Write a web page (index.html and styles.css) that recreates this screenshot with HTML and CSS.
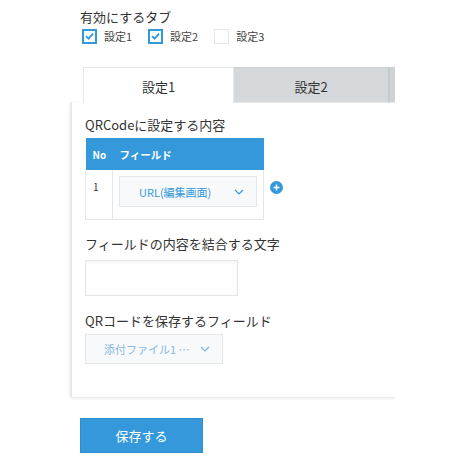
FILE: index.html
```html
<!DOCTYPE html>
<html lang="ja">
<head>
<meta charset="utf-8">
<link rel="stylesheet" href="styles.css">
</head>
<body>
<div class="page">
  <div class="enable">
    <div class="title">有効にするタブ</div>
    <div class="checks">
      <label class="check"><span class="box on"><svg viewBox="0 0 12 12" width="12" height="12"><path d="M2.2 6.2 L5 8.8 L9.8 3.4" fill="none" stroke="#3498db" stroke-width="2"/></svg></span><span class="clabel">設定1</span></label>
      <label class="check"><span class="box on"><svg viewBox="0 0 12 12" width="12" height="12"><path d="M2.2 6.2 L5 8.8 L9.8 3.4" fill="none" stroke="#3498db" stroke-width="2"/></svg></span><span class="clabel">設定2</span></label>
      <label class="check"><span class="box off"></span><span class="clabel">設定3</span></label>
    </div>
  </div>

  <div class="tabs">
    <div class="tab active">設定1</div>
    <div class="tab">設定2</div>
    <div class="tab third"></div>
  </div>

  <div class="panel">
    <div class="label">QRCodeに設定する内容</div>
    <div class="table-row">
      <table class="fields">
        <thead>
          <tr><th class="no">No</th><th class="fld">フィールド</th></tr>
        </thead>
        <tbody>
          <tr>
            <td class="no">1</td>
            <td class="fld">
              <div class="select sel-url"><span class="sel-text">URL(編集画面)</span><svg class="chev" viewBox="0 0 10 6" width="10" height="6"><path d="M1 1 L5 5 L9 1" fill="none" stroke="#3498db" stroke-width="1.2"/></svg></div>
            </td>
          </tr>
        </tbody>
      </table>
      <svg class="plus" viewBox="0 0 14 14" width="13" height="13"><circle cx="7" cy="7" r="7" fill="#3498db"/><path d="M7 3.8 V10.2 M3.8 7 H10.2" stroke="#fff" stroke-width="1.6"/></svg>
    </div>

    <div class="label lbl2">フィールドの内容を結合する文字</div>
    <div class="input"></div>

    <div class="label lbl3">QRコードを保存するフィールド</div>
    <div class="select sel-file"><span class="sel-text">添付ファイル1 ⋯</span><svg class="chev" viewBox="0 0 10 6" width="10" height="6"><path d="M1 1 L5 5 L9 1" fill="none" stroke="#7fb5e3" stroke-width="1.2"/></svg></div>
  </div>

  <button class="save">保存する</button>
</div>
</body>
</html>
```

FILE: styles.css
```css
html, body {
  margin: 0;
  padding: 0;
  background: #fff;
}
body {
  font-family: "Noto Sans CJK JP", "Open Sans", sans-serif;
  color: #333;
}
.page {
  width: 395px;
  height: 460px;
  overflow: hidden;
  padding-top: 8px;
  box-sizing: border-box;
}
.enable {
  margin-left: 80px;
}
.title {
  font-size: 13px;
  line-height: 18px;
  color: #333;
}
.checks {
  display: flex;
  margin-top: 2px;
  margin-left: 2px;
  height: 16px;
  align-items: center;
}
.check {
  display: flex;
  align-items: center;
  margin-right: 16px;
}
.box {
  width: 15px;
  height: 15px;
  box-sizing: border-box;
  display: flex;
  align-items: center;
  justify-content: center;
  background: #fff;
}
.box.on {
  border: 2px solid #3498db;
}
.box.off {
  border: 1px solid #e3e7e8;
}
.clabel {
  font-size: 11px;
  line-height: 14px;
  margin-left: 7px;
  color: #444;
}
.tabs {
  display: flex;
  margin-top: 23px;
  margin-left: 83px;
  height: 36px;
}
.tab {
  box-sizing: border-box;
  height: 36px;
  font-size: 13px;
  line-height: 37px;
  text-align: center;
  color: #333;
  background: #d4d8da;
  border-top: 1px solid #c8cdcf;
  border-bottom: 1px solid #e6e8e9;
  flex: none;
}
.tab.active {
  width: 151px;
  background: #fff;
  border: 1px solid #e3e7e8;
  border-bottom: none;
}
.tab:nth-child(2) {
  width: 154px;
}
.tab.third {
  width: 60px;
  background: #cfd3d5;
  border-left: 2px solid #c6cacd;
}
.panel {
  margin-left: 71px;
  width: 400px;
  height: 295px;
  box-sizing: border-box;
  margin-top: -1px;
  padding: 14px 0 0 13px;
  border-left: 1px solid #e3e7e8;
  box-shadow: -1px 1px 3px rgba(0,0,0,0.12);
  background: #fff;
}
.label {
  font-size: 13px;
  line-height: 18px;
  color: #333;
}
.table-row {
  display: flex;
  align-items: flex-start;
  margin-top: 4px;
}
.fields {
  border-collapse: collapse;
  width: 179px;
}
.fields th {
  background: #3498db;
  color: #fff;
  font-size: 10px;
  font-weight: bold;
  height: 32px;
  padding: 0;
  text-align: left;
}
.fields th.no {
  width: 27px;
  padding-left: 7px;
  box-sizing: border-box;
}
.fields th.fld {
  padding-left: 7px;
  font-size: 10.5px;
}
.fields td {
  border: 1px solid #e3e7e8;
  border-top: none;
  height: 49px;
  padding: 0;
  vertical-align: top;
  box-sizing: border-box;
}
.fields td.no {
  font-size: 10px;
  line-height: 14px;
  padding: 10px 0 0 7px;
}
.fields td.fld {
  padding: 6px 0 0 6px;
}
.select {
  box-sizing: border-box;
  display: flex;
  align-items: center;
  background: #f7f9fa;
  border: 1px solid #e3e7e8;
  font-size: 11px;
}
.sel-url {
  width: 138px;
  height: 31px;
  padding-left: 19px;
  color: #3498db;
}
.sel-url .chev {
  margin-left: 23px;
}
.plus {
  margin-left: 6px;
  margin-top: 43px;
}
.lbl2 {
  margin-top: 15px;
}
.input {
  margin-top: 7px;
  width: 153px;
  height: 36px;
  box-sizing: border-box;
  border: 1px solid #e3e7e8;
  box-shadow: inset 0 1px 3px rgba(0,0,0,0.06);
  background: #fff;
}
.lbl3 {
  margin-top: 16px;
}
.sel-file {
  margin-top: 4px;
  width: 138px;
  height: 30px;
  padding-left: 18px;
  color: #86b8e4;
}
.sel-file .chev {
  margin-left: 10px;
}
.save {
  display: block;
  margin: 21px 0 0 80px;
  width: 123px;
  height: 35px;
  border: 1px solid #2e8fcf;
  background: #3498db;
  color: #fff;
  font-family: "Noto Sans CJK JP", sans-serif;
  font-size: 13px;
  padding: 0;
}
```
